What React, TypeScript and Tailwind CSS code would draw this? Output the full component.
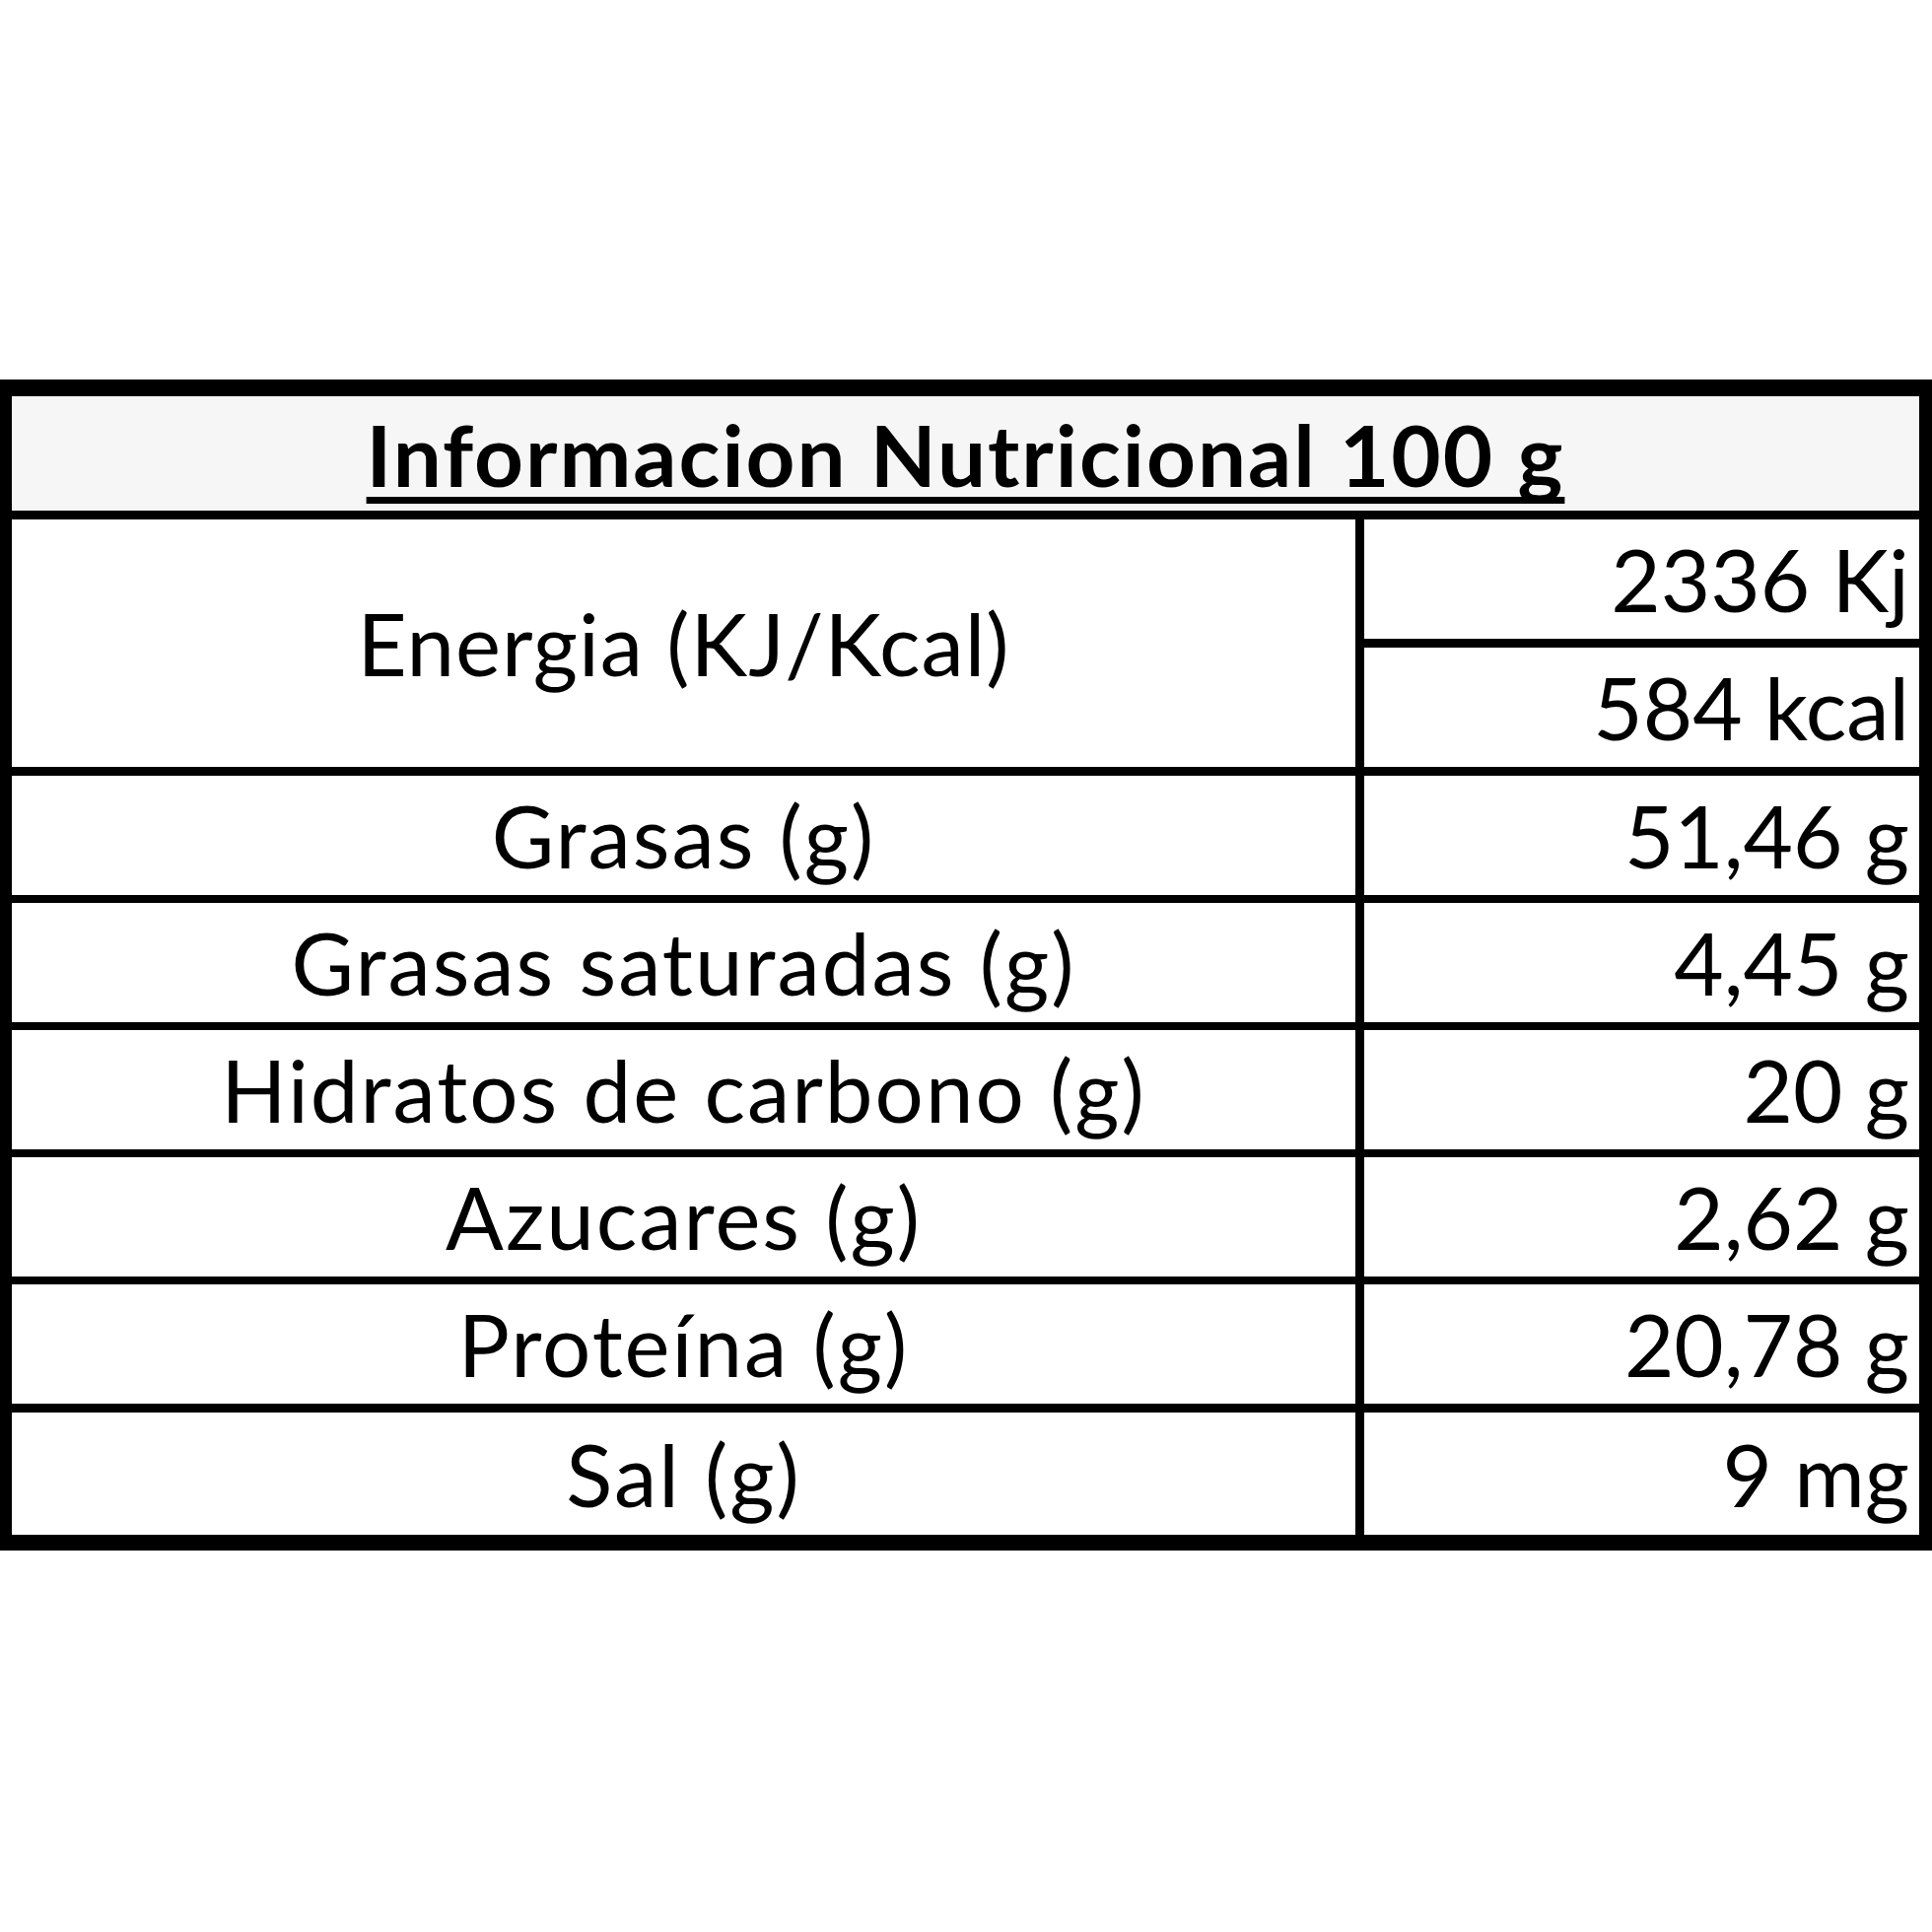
const rows = [
  { label: "Grasas (g)", value: "51,46 g" },
  { label: "Grasas saturadas (g)", value: "4,45 g" },
  { label: "Hidratos de carbono (g)", value: "20 g" },
  { label: "Azucares (g)", value: "2,62 g" },
  { label: "Proteína (g)", value: "20,78 g" },
];

function Row({ label, value, height = "h-[121px]", line = "border-t-[8px]" }: { label: string; value: string; height?: string; line?: string }) {
  return (
    <div className={`flex ${height} ${line} border-black box-content`}>
      <div className="w-[1363px] border-r-[9px] border-black flex items-center justify-center box-content tracking-[2px]">
        {label}
      </div>
      <div className="flex-1 flex items-center justify-end pr-[10px]">{value}</div>
    </div>
  );
}

export default function App() {
  return (
    <div className="w-[1960px] h-[1960px] bg-white pt-[385px] text-black font-['Lato',sans-serif] text-[87px] leading-none">
      <div className="border-t-[17px] border-b-[16px] border-l-[12px] border-r-[13px] border-black">
        <div className="h-[116px] bg-[#f6f6f6] flex items-center justify-center">
          <span className="font-bold tracking-[2px] underline decoration-[7px] underline-offset-[10px] [text-decoration-skip-ink:none]">
            Informacion Nutricional 100 g
          </span>
        </div>

        {/* energia: two values stacked */}
        <div className="flex border-t-[9px] border-black">
          <div className="w-[1363px] border-r-[9px] border-black flex items-center justify-center box-content tracking-[1px]">
            Energia (KJ/Kcal)
          </div>
          <div className="flex-1 flex flex-col">
            <div className="h-[121px] flex items-center justify-end pr-[10px]">2336 Kj</div>
            <div className="h-[121px] border-t-[9px] border-black flex items-center justify-end pr-[10px] box-content">
              584 kcal
            </div>
          </div>
        </div>

        {rows.map((r, i) => (
          <Row key={r.label} label={r.label} value={r.value} line={i === 0 ? "border-t-[9px]" : "border-t-[8px]"} />
        ))}
        <Row label="Sal (g)" value="9 mg" height="h-[124px]" line="border-t-[9px]" />
      </div>
    </div>
  );
}
